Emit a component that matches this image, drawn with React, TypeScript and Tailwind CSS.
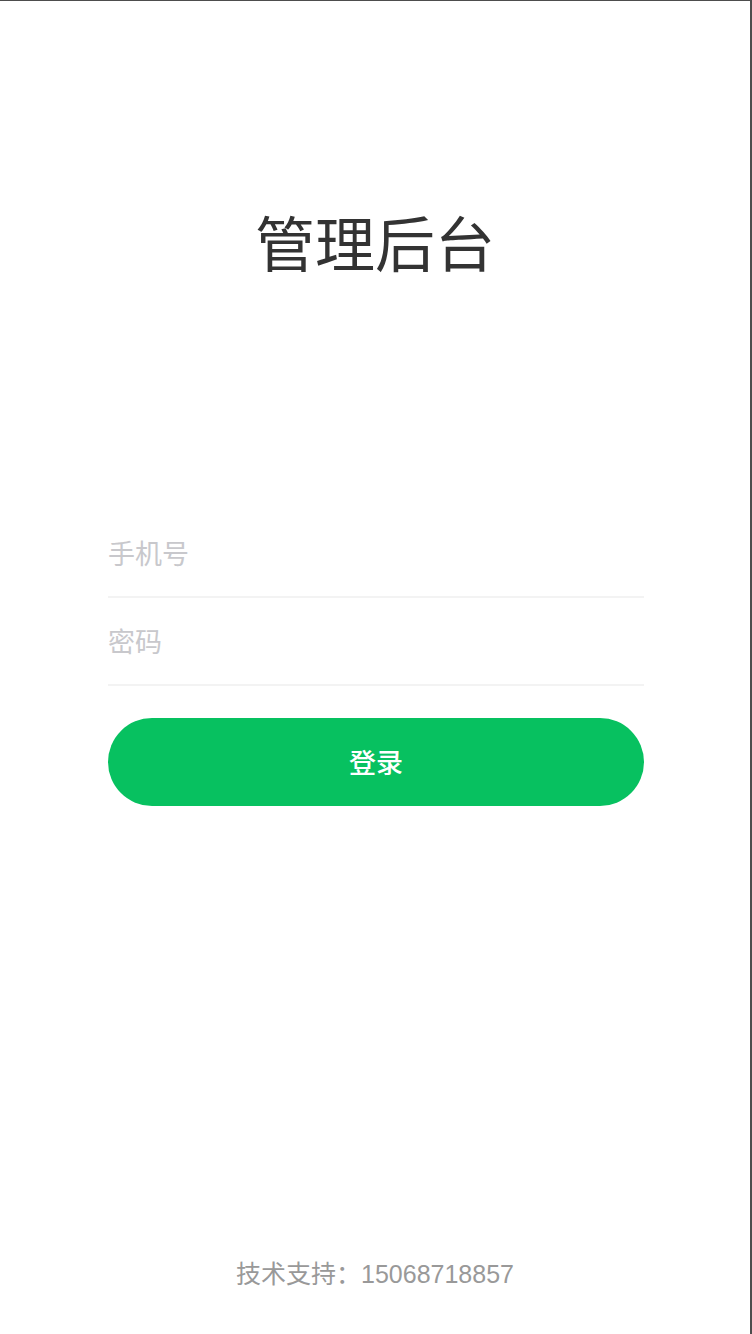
export default function App() {
  return (
    <div
      className="flex min-h-[1334px] w-full flex-col border-t border-r-2 border-[#4d4d4d] bg-white"
      style={{ fontFamily: '"Noto Sans CJK SC", "Noto Sans", sans-serif' }}
    >
      {/* Title */}
      <h1 className="pt-[197px] text-center text-[60px] leading-[86px] font-normal text-[#333333]">
        管理后台
      </h1>

      {/* Form */}
      <form
        className="mt-[226px] ml-[108px] mr-[106px] flex flex-col"
        onSubmit={(e) => e.preventDefault()}
      >
        <div className="flex h-[88px] items-center border-b-2 border-[#f3f3f3]">
          <input
            type="tel"
            placeholder="手机号"
            className="w-full bg-transparent text-[27px] text-[#333] outline-none placeholder:text-[#c8c8cc]"
          />
        </div>
        <div className="flex h-[88px] items-center border-b-2 border-[#f3f3f3]">
          <input
            type="password"
            placeholder="密码"
            className="w-full bg-transparent text-[27px] text-[#333] outline-none placeholder:text-[#c8c8cc]"
          />
        </div>
        <button
          type="submit"
          className="mt-[32px] h-[88px] w-full rounded-full bg-[#07c160] text-[27px] font-medium text-white"
        >
          登录
        </button>
      </form>

      {/* Footer */}
      <p
        className="mt-auto pb-[41px] text-center text-[25px] text-[#999999]"
        style={{ fontFamily: '"Liberation Sans", "Noto Sans CJK SC", sans-serif' }}
      >
        技术支持：15068718857
      </p>
    </div>
  );
}
